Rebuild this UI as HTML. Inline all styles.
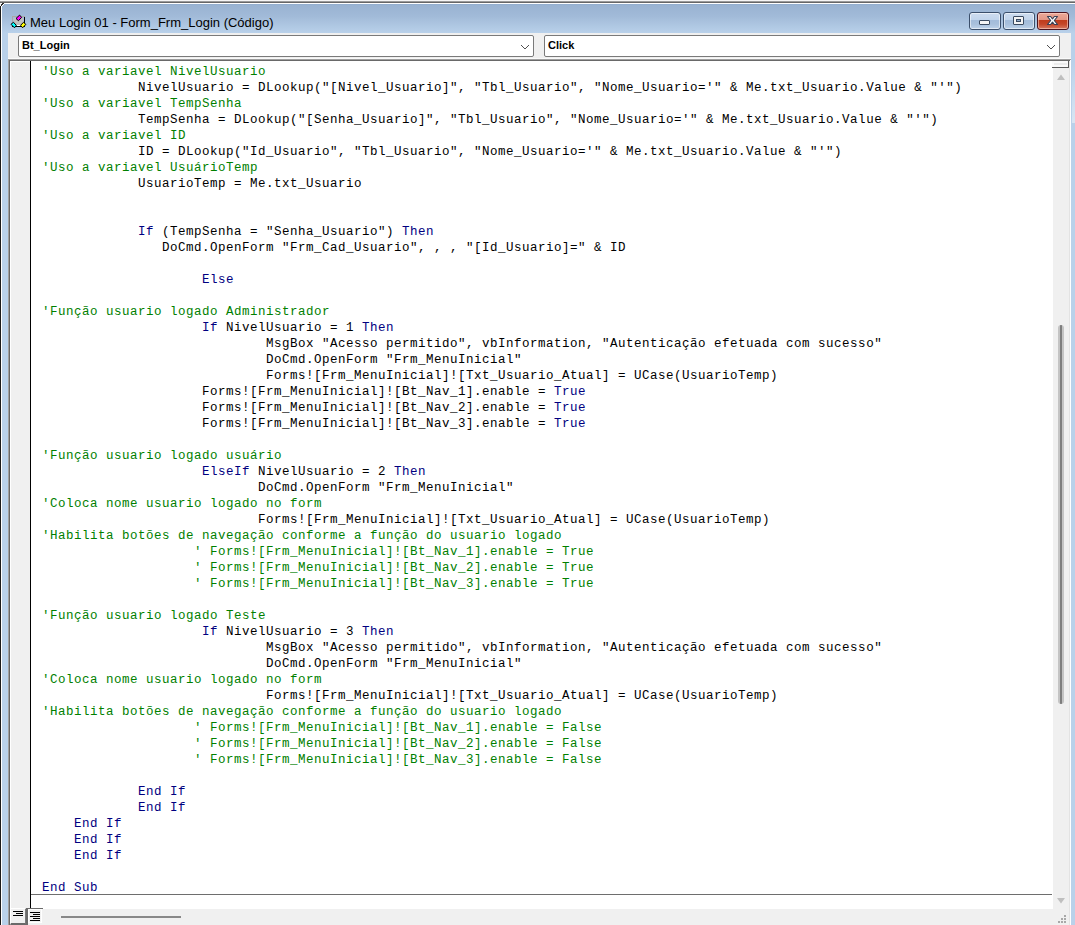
<!DOCTYPE html>
<html><head><meta charset="utf-8">
<style>
*{margin:0;padding:0;box-sizing:border-box}
html,body{width:1075px;height:925px;overflow:hidden;background:#b9d1ea;position:relative;font-family:"Liberation Sans",sans-serif}
.a{position:absolute}
pre{position:absolute;left:42px;top:64px;font-family:"Liberation Mono",monospace;font-size:12.5px;letter-spacing:0.5px;line-height:16px;color:#000;white-space:pre}
.c{color:#008000}
.k{color:#000080}
</style></head><body>
<!-- top strip -->
<div class="a" style="left:0;top:0;width:1075px;height:1px;background:#f6f6f6"></div>
<div class="a" style="left:0;top:1px;width:1075px;height:1px;background:#9a9a9a"></div>
<div class="a" style="left:0;top:2px;width:1075px;height:1px;background:#666"></div>
<!-- window frame -->
<div class="a" style="left:0;top:3px;width:1px;height:922px;background:#f6f6f6"></div>
<div class="a" style="left:0;top:6px;width:1px;height:919px;background:#1a1a1a"></div>
<div class="a" style="left:4px;top:3px;width:1071px;height:1px;background:#fff"></div>
<div class="a" style="left:1px;top:3px;width:1px;height:922px;background:#fff"></div>
<!-- title gradient -->
<div class="a" style="left:2px;top:4px;width:1073px;height:29px;background:linear-gradient(#8eabcd 0px,#99b3d2 1px,#a1bad8 12px,#b9d1ea 29px)"></div>
<div class="a" style="left:2px;top:3px;width:2px;height:1px;background:#2a2a2a"></div>
<div class="a" style="left:1px;top:4px;width:2px;height:1px;background:#2a2a2a"></div>
<div class="a" style="left:1px;top:5px;width:1px;height:1px;background:#2a2a2a"></div>
<div class="a" style="left:3px;top:4px;width:1px;height:1px;background:#fff"></div>
<div class="a" style="left:2px;top:5px;width:1px;height:1px;background:#fff"></div>
<!-- icon -->
<svg class="a" style="left:8px;top:12px" width="24" height="20" viewBox="0 0 24 20">
 <g shape-rendering="crispEdges">
 <rect x="4" y="4" width="13" height="1" fill="#a8a8a8"/>
 <rect x="4" y="4" width="1" height="11" fill="#a8a8a8"/>
 <rect x="16" y="5" width="1" height="10" fill="#000"/>
 <rect x="4" y="14" width="13" height="1" fill="#000"/>
 <rect x="6" y="6" width="9" height="7" fill="#c2c0be"/>
 <rect x="9" y="13" width="4" height="1" fill="#fff"/>
 </g>
 <path d="M11.6 3.1 L13.6 5.4 L10.5 8.7 L8 6.5 Z" fill="#ff00ff" stroke="#000" stroke-width="1"/>
 <path d="M3 12.3 L5.5 10.3 L8.3 13.3 L6.5 15.8 Z" fill="#00ffff" stroke="#000" stroke-width="1"/>
 <path d="M15.5 10.3 L17.9 12.4 L14.6 15.8 L12.6 13.3 Z" fill="#ffff00" stroke="#000" stroke-width="1"/>
</svg>
<div class="a" id="title" style="left:30px;top:15px;font-size:13px;line-height:16px;color:#000;white-space:nowrap">Meu Login 01 - Form_Frm_Login (Código)</div>
<!-- caption buttons -->
<div class="a" style="left:969px;top:12px;width:32px;height:18px;border:1px solid #3b4f6b;border-radius:3px;background:linear-gradient(#cddcef 0,#c2d5ec 42%,#a3bcda 46%,#a8c0dc 70%,#bed3ea 100%);box-shadow:inset 0 0 0 1px rgba(255,255,255,.55)"></div>
<div class="a" style="left:979px;top:20px;width:11px;height:5px;border:1px solid #3a4a60;border-radius:1px;background:#f4f4f4"></div>
<div class="a" style="left:1003px;top:12px;width:32px;height:18px;border:1px solid #3b4f6b;border-radius:3px;background:linear-gradient(#cddcef 0,#c2d5ec 42%,#a3bcda 46%,#a8c0dc 70%,#bed3ea 100%);box-shadow:inset 0 0 0 1px rgba(255,255,255,.55)"></div>
<div class="a" style="left:1013px;top:16px;width:11px;height:9px;border:1px solid #3a4a60;border-radius:1px;background:#f4f4f4"></div>
<div class="a" style="left:1016px;top:19px;width:5px;height:3px;border:1px solid #3a4a60;background:#8fa8c8"></div>
<div class="a" style="left:1037px;top:12px;width:32px;height:18px;border:1px solid #4a1420;border-radius:3px;background:linear-gradient(#eba898 0,#e39786 42%,#c03c1c 46%,#c54628 70%,#d77a62 100%);box-shadow:inset 0 0 0 1px rgba(255,220,210,.55)"></div>
<svg class="a" style="left:1046px;top:15px" width="13" height="11" viewBox="0 0 13 11">
 <path d="M1.5 1.5 L4.6 1.5 L6.5 3.9 L8.4 1.5 L11.5 1.5 L8.3 5.5 L11.5 9.5 L8.4 9.5 L6.5 7.1 L4.6 9.5 L1.5 9.5 L4.7 5.5 Z" fill="#fff" stroke="#3a4256" stroke-width="1.2" stroke-linejoin="round"/>
</svg>
<!-- gray bar -->
<div class="a" style="left:8px;top:33px;width:1063px;height:26px;background:#f0f0f0"></div>
<div class="a" style="left:8px;top:58px;width:1063px;height:1px;background:#fafafa"></div>
<!-- combos -->
<div class="a" style="left:18px;top:35px;width:516px;height:22px;border:1px solid #7a7a7a;border-radius:2px;background:#fff"></div>
<div class="a" style="left:22px;top:37px;font-size:11px;font-weight:bold;line-height:16px;color:#000">Bt_Login</div>
<svg class="a" style="left:520px;top:44px" width="10" height="7"><path d="M1 1 L5 5 L9 1" stroke="#505050" stroke-width="1" fill="none"/></svg>
<div class="a" style="left:544px;top:35px;width:516px;height:22px;border:1px solid #7a7a7a;border-radius:2px;background:#fff"></div>
<div class="a" style="left:548px;top:37px;font-size:11px;font-weight:bold;line-height:16px;color:#000">Click</div>
<svg class="a" style="left:1046px;top:44px" width="10" height="7"><path d="M1 1 L5 5 L9 1" stroke="#505050" stroke-width="1" fill="none"/></svg>
<!-- code frame -->
<div class="a" style="left:8px;top:59px;width:1063px;height:866px;background:#fff;border-top:1px solid #a0a0a0;border-left:1px solid #a0a0a0"></div>
<div class="a" style="left:9px;top:60px;width:1061px;height:865px;border-top:1px solid #696969;border-left:1px solid #696969"></div>
<div class="a" style="left:1069px;top:61px;width:1px;height:864px;background:#e3e3e3"></div>
<div class="a" style="left:1070px;top:60px;width:1px;height:865px;background:#fff"></div>
<div class="a" style="left:1072px;top:62px;width:3px;height:61px;background:linear-gradient(#b9d1ea,#d9e6f3)"></div>
<!-- margin -->
<div class="a" style="left:10px;top:61px;width:20px;height:847px;background:#f0f0f0;border-left:1px solid #fff;border-top:1px solid #fff"></div>
<div class="a" style="left:30px;top:61px;width:1px;height:847px;background:#000"></div>
<!-- separator line -->
<div class="a" style="left:31px;top:894px;width:1021px;height:1px;background:#6e6e6e"></div>
<!-- vertical scrollbar -->
<div class="a" style="left:1053px;top:68px;width:16px;height:841px;background:#f0f0f0"></div>
<div class="a" style="left:1052px;top:61px;width:17px;height:7px;background:#fafafa;border-bottom:1px solid #5a5a5a;border-right:1px solid #5a5a5a"></div>
<div class="a" style="left:1054px;top:63px;width:13px;height:2px;background:#ececec"></div>
<svg class="a" style="left:1057px;top:74px" width="8" height="6"><path d="M0 6 L4 0.5 L8 6 Z" fill="#bfbfbf"/></svg>
<svg class="a" style="left:1057px;top:898px" width="8" height="6"><path d="M0 0 L4 5.5 L8 0 Z" fill="#bfbfbf"/></svg>
<div class="a" style="left:1058px;top:325px;width:6px;height:379px;border-radius:3px;background:linear-gradient(90deg,#c4c4c4 0,#c4c4c4 30%,#7e7e7e 35%,#7e7e7e 65%,#c4c4c4 70%,#c4c4c4 100%)"></div>
<!-- bottom bar -->
<div class="a" style="left:10px;top:908px;width:33px;height:17px;background:#f0f0f0"></div>
<div class="a" style="left:43px;top:909px;width:1026px;height:16px;background:#f0f0f0"></div>
<div class="a" style="left:61px;top:916px;width:120px;height:2px;background:#888"></div>
<!-- grip -->
<div class="a" style="left:1064px;top:915px;width:2px;height:2px;background:#a8a8a8"></div>
<div class="a" style="left:1061px;top:918px;width:2px;height:2px;background:#a8a8a8"></div>
<div class="a" style="left:1064px;top:918px;width:2px;height:2px;background:#a8a8a8"></div>
<div class="a" style="left:1058px;top:921px;width:2px;height:2px;background:#a8a8a8"></div>
<div class="a" style="left:1061px;top:921px;width:2px;height:2px;background:#a8a8a8"></div>
<div class="a" style="left:1064px;top:921px;width:2px;height:2px;background:#a8a8a8"></div>
<!-- view buttons -->
<div class="a" style="left:10px;top:908px;width:17px;height:17px;background:#f0f0f0;border-top:1px solid #fff;border-left:1px solid #fff;border-right:2px solid #7a7a7a;border-bottom:2px solid #6a6a6a"></div>
<div class="a" style="left:13px;top:911px;width:10px;height:1px;background:#000"></div>
<div class="a" style="left:16px;top:913px;width:7px;height:1px;background:#000"></div>
<div class="a" style="left:13px;top:915px;width:10px;height:1px;background:#000"></div>
<div class="a" style="left:26px;top:908px;width:17px;height:17px;background:#f0f0f0;border-top:1px solid #6a6a6a;border-left:2px solid #6a6a6a"></div>
<div class="a" style="left:28px;top:909px;width:14px;height:14px;border:1px solid #fff"></div>
<div class="a" style="left:30px;top:912px;width:10px;height:1px;background:#000"></div>
<div class="a" style="left:33px;top:914px;width:7px;height:1px;background:#000"></div>
<div class="a" style="left:30px;top:916px;width:10px;height:1px;background:#000"></div>
<div class="a" style="left:33px;top:918px;width:7px;height:1px;background:#000"></div>
<div class="a" style="left:30px;top:920px;width:10px;height:1px;background:#000"></div>
<!-- code -->
<pre><span class="c">'Uso a variavel NivelUsuario</span>
            NivelUsuario = DLookup("[Nivel_Usuario]", "Tbl_Usuario", "Nome_Usuario='" &amp; Me.txt_Usuario.Value &amp; "'")
<span class="c">'Uso a variavel TempSenha</span>
            TempSenha = DLookup("[Senha_Usuario]", "Tbl_Usuario", "Nome_Usuario='" &amp; Me.txt_Usuario.Value &amp; "'")
<span class="c">'Uso a variavel ID</span>
            ID = DLookup("Id_Usuario", "Tbl_Usuario", "Nome_Usuario='" &amp; Me.txt_Usuario.Value &amp; "'")
<span class="c">'Uso a variavel UsuárioTemp</span>
            UsuarioTemp = Me.txt_Usuario


            <span class="k">If</span> (TempSenha = "Senha_Usuario") <span class="k">Then</span>
               DoCmd.OpenForm "Frm_Cad_Usuario", , , "[Id_Usuario]=" &amp; ID

                    <span class="k">Else</span>

<span class="c">'Função usuario logado Administrador</span>
                    <span class="k">If</span> NivelUsuario = 1 <span class="k">Then</span>
                            MsgBox "Acesso permitido", vbInformation, "Autenticação efetuada com sucesso"
                            DoCmd.OpenForm "Frm_MenuInicial"
                            Forms![Frm_MenuInicial]![Txt_Usuario_Atual] = UCase(UsuarioTemp)
                    Forms![Frm_MenuInicial]![Bt_Nav_1].enable = <span class="k">True</span>
                    Forms![Frm_MenuInicial]![Bt_Nav_2].enable = <span class="k">True</span>
                    Forms![Frm_MenuInicial]![Bt_Nav_3].enable = <span class="k">True</span>

<span class="c">'Função usuario logado usuário</span>
                    <span class="k">ElseIf</span> NivelUsuario = 2 <span class="k">Then</span>
                           DoCmd.OpenForm "Frm_MenuInicial"
<span class="c">'Coloca nome usuario logado no form</span>
                           Forms![Frm_MenuInicial]![Txt_Usuario_Atual] = UCase(UsuarioTemp)
<span class="c">'Habilita botões de navegação conforme a função do usuario logado</span>
                   <span class="c">' Forms![Frm_MenuInicial]![Bt_Nav_1].enable = True</span>
                   <span class="c">' Forms![Frm_MenuInicial]![Bt_Nav_2].enable = True</span>
                   <span class="c">' Forms![Frm_MenuInicial]![Bt_Nav_3].enable = True</span>

<span class="c">'Função usuario logado Teste</span>
                    <span class="k">If</span> NivelUsuario = 3 <span class="k">Then</span>
                            MsgBox "Acesso permitido", vbInformation, "Autenticação efetuada com sucesso"
                            DoCmd.OpenForm "Frm_MenuInicial"
<span class="c">'Coloca nome usuario logado no form</span>
                            Forms![Frm_MenuInicial]![Txt_Usuario_Atual] = UCase(UsuarioTemp)
<span class="c">'Habilita botões de navegação conforme a função do usuario logado</span>
                   <span class="c">' Forms![Frm_MenuInicial]![Bt_Nav_1].enable = False</span>
                   <span class="c">' Forms![Frm_MenuInicial]![Bt_Nav_2].enable = False</span>
                   <span class="c">' Forms![Frm_MenuInicial]![Bt_Nav_3].enable = False</span>

            <span class="k">End If</span>
            <span class="k">End If</span>
    <span class="k">End If</span>
    <span class="k">End If</span>
    <span class="k">End If</span>

<span class="k">End Sub</span></pre>
</body></html>
